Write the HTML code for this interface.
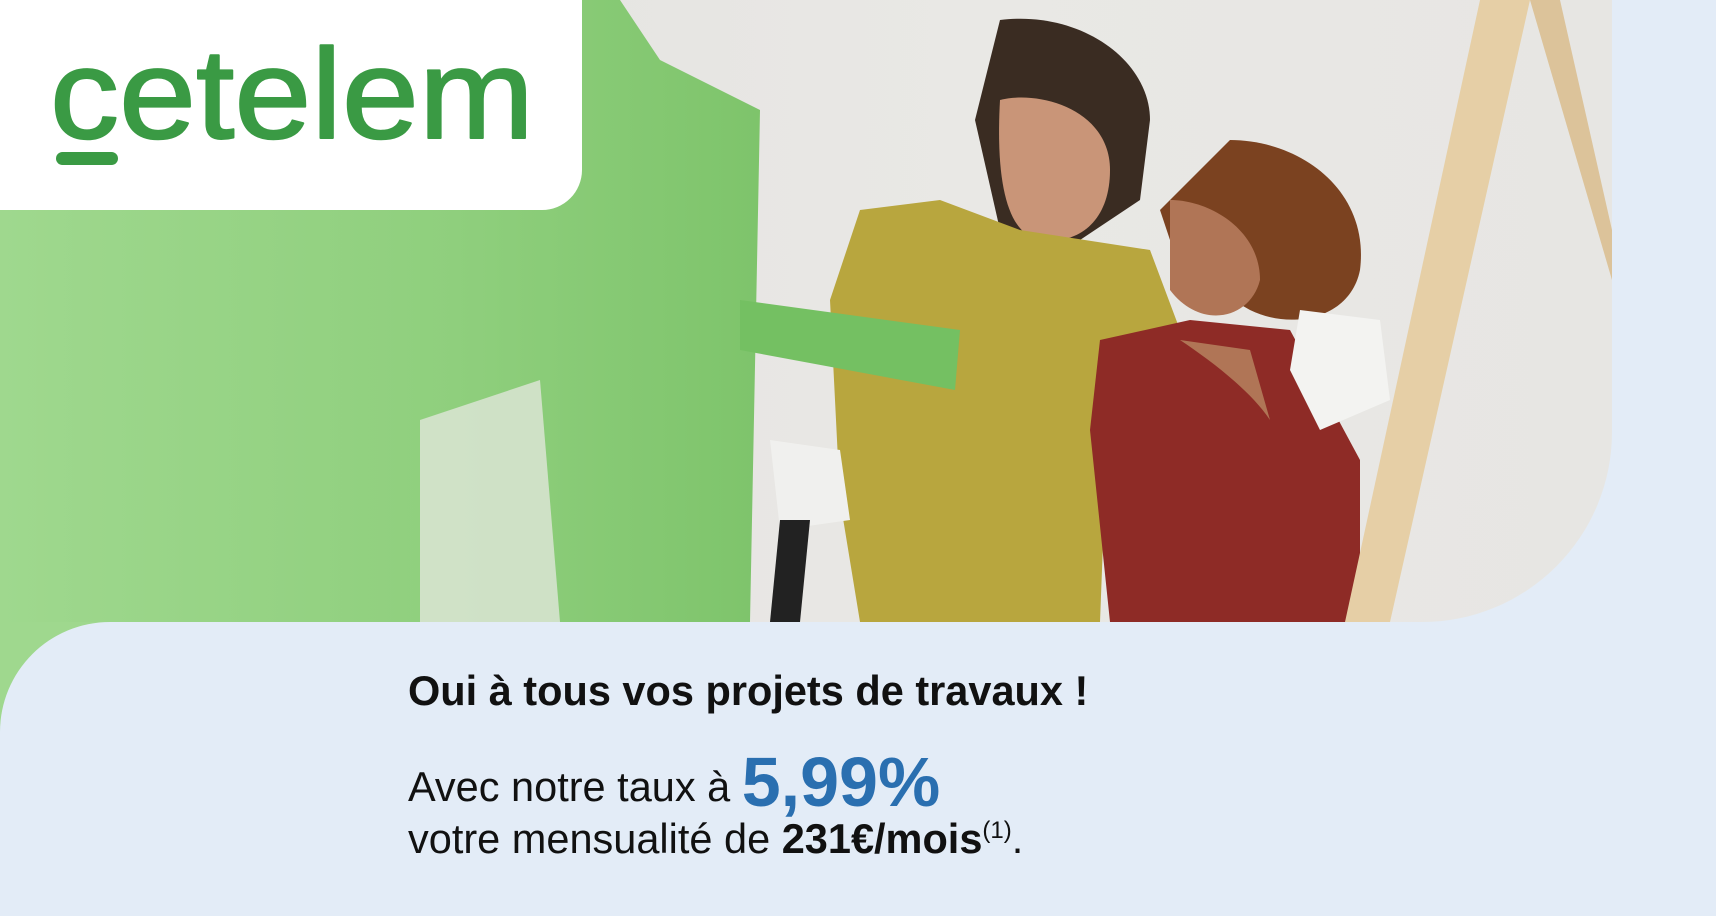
<!DOCTYPE html>
<html><head><meta charset="utf-8"><style>
html,body{margin:0;padding:0}
body{width:1716px;height:916px;position:relative;overflow:hidden;background:#e3ecf7;font-family:"Liberation Sans",Arial,sans-serif}
.photo{position:absolute;left:0;top:0;width:1612px;height:622px;background:linear-gradient(90deg,#e2e1de 0%,#e9e8e5 60%,#e7e6e3 100%);border-bottom-right-radius:190px;overflow:hidden}
.corner{position:absolute;left:0;top:600px;width:140px;height:140px;background:#9fd88e}
.bottom{position:absolute;left:0;top:622px;width:1716px;height:294px;background:#e3ecf7;border-top-left-radius:110px}
.logo{position:absolute;left:0;top:0;width:582px;height:210px;background:#fff;border-bottom-right-radius:40px}
.t1{position:absolute;left:408px;top:667px;font-size:41.5px;font-weight:bold;color:#111}
.t2{position:absolute;left:408px;top:742px;font-size:41.5px;color:#111}
.t2 b.big{font-size:70px;color:#2a6fb0;font-weight:bold;vertical-align:-5px}
.t3{position:absolute;left:408px;top:815px;font-size:41.5px;color:#111}
</style></head><body>
<div class="corner"></div>
<div class="photo">
<svg width="1612" height="622" viewBox="0 0 1612 622">
<defs><linearGradient id="g" x1="0" x2="1"><stop offset="0" stop-color="#9fd88e"/><stop offset=".6" stop-color="#8fcf7d"/><stop offset="1" stop-color="#7ec46b"/></linearGradient></defs>
<path d="M0 0 H620 L660 60 L700 80 L760 110 L750 622 H0 Z" fill="url(#g)"/>
<path d="M420 420 L540 380 L560 622 L420 622 Z" fill="#e0e6da" opacity=".8"/>
<path d="M1000 20 C1080 10 1150 60 1150 120 L1140 200 L1080 240 L1000 230 L975 120 Z" fill="#3a2c22"/>
<path d="M1000 100 C1040 90 1110 110 1110 170 C1110 220 1080 245 1040 240 C1010 235 995 190 1000 100Z" fill="#c99578"/>
<path d="M860 210 L940 200 L1020 230 L1150 250 L1180 330 L1110 360 L1100 622 L860 622 L840 500 L830 300 Z" fill="#b8a63e"/>
<path d="M740 300 L960 330 L955 390 L740 350 Z" fill="#74c062"/>
<path d="M770 440 L840 450 L850 520 L780 530 Z" fill="#f0f0ee"/>
<path d="M780 520 L810 520 L800 622 L770 622 Z" fill="#222"/>
<path d="M1230 140 C1300 140 1370 190 1360 270 C1350 320 1290 330 1250 310 L1180 270 L1160 210 Z" fill="#7b4220"/>
<path d="M1170 200 C1210 200 1260 230 1260 280 C1250 320 1200 330 1170 290 Z" fill="#b07556"/>
<path d="M1100 340 L1190 320 L1290 330 L1360 460 L1360 622 L1110 622 L1090 430 Z" fill="#8e2b26"/>
<path d="M1180 340 C1210 360 1250 390 1270 420 L1250 350 Z" fill="#b07556"/>
<path d="M1300 310 L1380 320 L1390 400 L1320 430 L1290 370 Z" fill="#f3f3f1"/>
<path d="M1480 0 L1530 0 L1390 622 L1345 622 Z" fill="#e6cfa6"/>
<path d="M1530 0 L1560 0 L1612 230 L1612 280 Z" fill="#dcc39a"/>
</svg>
</div>
<div class="bottom"></div>
<div class="logo">
<svg width="582" height="210" viewBox="0 0 582 210">
<text x="50" y="138" font-family="Liberation Sans, sans-serif" font-size="128" fill="#3a9a44" stroke="#3a9a44" stroke-width="2" stroke-linejoin="round" textLength="484" lengthAdjust="spacingAndGlyphs">cetelem</text>
<rect x="56" y="152" width="62" height="13" rx="6.5" fill="#3a9a44"/>
</svg>
</div>
<div class="t1">Oui à tous vos projets de travaux !</div>
<div class="t2">Avec notre taux à <b class="big">5,99%</b></div>
<div class="t3">votre mensualité de <b>231€/mois</b><sup style="font-size:24px">(1)</sup>.</div>
</body></html>
